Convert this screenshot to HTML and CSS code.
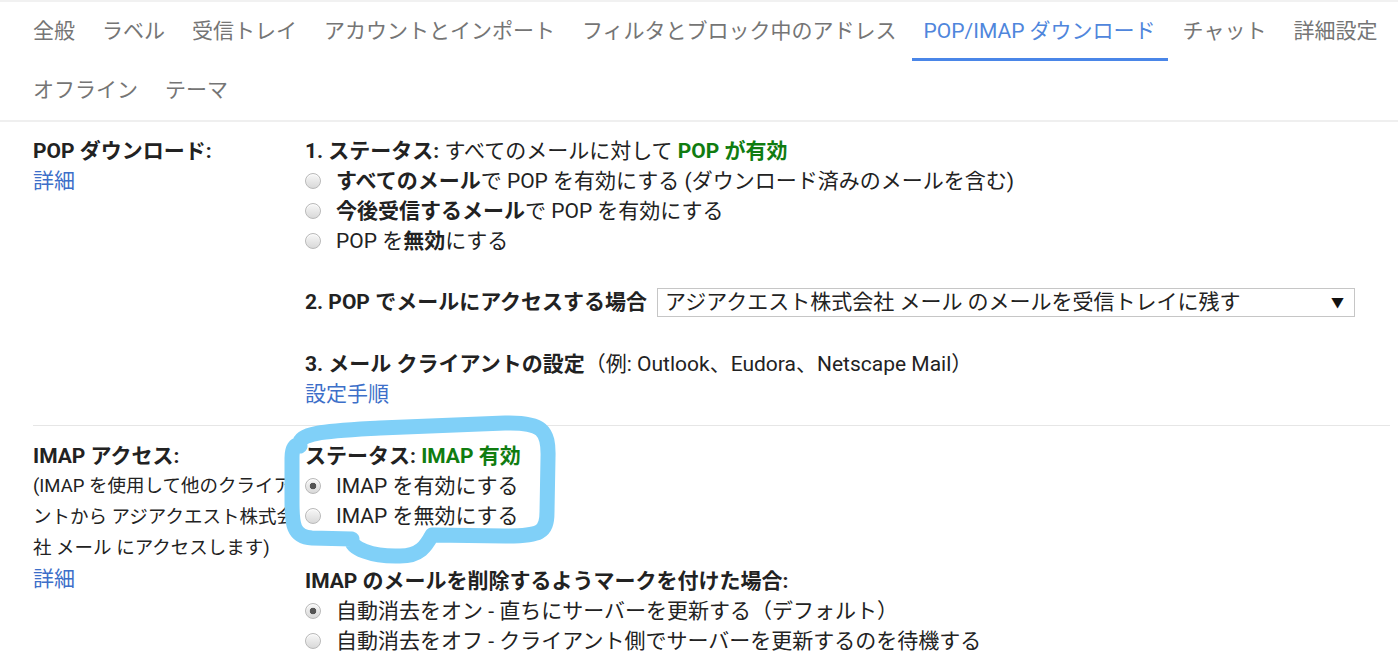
FILE: index.html
```html
<!DOCTYPE html>
<html lang="ja">
<head>
<meta charset="utf-8">
<title>設定 - POP/IMAP ダウンロード</title>
<link rel="stylesheet" href="styles.css">
</head>
<body>
<div class="page">
  <nav class="tabs">
    <a class="tab">全般</a>
    <a class="tab">ラベル</a>
    <a class="tab">受信トレイ</a>
    <a class="tab">アカウントとインポート</a>
    <a class="tab">フィルタとブロック中のアドレス</a>
    <a class="tab active">POP/IMAP ダウンロード</a>
    <a class="tab">チャット</a>
    <a class="tab">詳細設定</a>
    <a class="tab">オフライン</a>
    <a class="tab">テーマ</a>
  </nav>

  <section class="setting pop">
    <div class="label-col">
      <div class="label">POP ダウンロード:</div>
      <a class="link">詳細</a>
    </div>
    <div class="value-col">
      <div class="line"><b>1. ステータス:</b> すべてのメールに対して <b class="green">POP が有効</b></div>
      <label class="opt"><span class="radio"></span><span><b>すべてのメール</b>で POP を有効にする (ダウンロード済みのメールを含む)</span></label>
      <label class="opt"><span class="radio"></span><span><b>今後受信するメール</b>で POP を有効にする</span></label>
      <label class="opt"><span class="radio"></span><span>POP を<b>無効</b>にする</span></label>

      <div class="line step2"><b>2. POP でメールにアクセスする場合</b>
        <div class="selectbox"><span>アジアクエスト株式会社 メール のメールを受信トレイに残す</span><span class="arrow">▼</span></div>
      </div>

      <div class="line step3"><b>3. メール クライアントの設定</b>（例: Outlook、Eudora、Netscape Mail）</div>
      <a class="link line">設定手順</a>
    </div>
  </section>

  <section class="setting imap">
    <div class="label-col">
      <div class="label">IMAP アクセス:</div>
      <div class="desc">(IMAP を使用して他のクライアントから アジアクエスト株式会社 メール にアクセスします)</div>
      <a class="link">詳細</a>
    </div>
    <div class="value-col">
      <div class="line"><b>ステータス:</b> <b class="green">IMAP 有効</b></div>
      <label class="opt"><span class="radio checked"></span><span>IMAP を有効にする</span></label>
      <label class="opt"><span class="radio"></span><span>IMAP を無効にする</span></label>

      <div class="line sub"><b>IMAP のメールを削除するようマークを付けた場合:</b></div>
      <label class="opt"><span class="radio checked"></span><span>自動消去をオン - 直ちにサーバーを更新する（デフォルト）</span></label>
      <label class="opt"><span class="radio"></span><span>自動消去をオフ - クライアント側でサーバーを更新するのを待機する</span></label>
    </div>
  </section>

  <svg class="annotation" viewBox="270 405 300 165" width="300" height="165" aria-hidden="true">
    <path d="M 300 446 C 296 432, 330 431, 380 428 L 505 423 C 542 422, 549 430, 548 458 L 547 512 C 547 533, 540 536, 505 536 L 432 535 C 426 546, 420 556, 400 556 C 372 557, 350 548, 352 539 L 312 538 C 293 537, 292 524, 292 502 L 292 458 C 292 448, 295 444, 300 446 Z"
      fill="none" stroke="#80d0f8" stroke-width="15" stroke-linejoin="round" stroke-linecap="round"/>
  </svg>
</div>
</body>
</html>
```

FILE: styles.css
```css
* { box-sizing: border-box; }

html, body {
  margin: 0;
  padding: 0;
  background: #fff;
}

body {
  font-family: Roboto, "Noto Sans CJK JP", "Noto Sans", sans-serif;
  font-size: 21px;
  color: #222;
  overflow: hidden;
}

.page {
  position: relative;
  width: 1398px;
  min-height: 664px;
}

b { font-weight: 700; }

.tabs {
  display: flex;
  flex-wrap: wrap;
  padding: 0 0 0 21px;
  border-top: 2px solid #f1f1f1;
  border-bottom: 2px solid #efefef;
}

.tab {
  display: flex;
  align-items: center;
  height: 59px;
  padding: 2px 12px 0;
  margin-right: 3px;
  color: #757575;
  border-bottom: 3px solid transparent;
  white-space: nowrap;
  line-height: 1;
}

.tab.active {
  color: #4f86dc;
  border-bottom-color: #4a86e8;
}

.setting {
  display: flex;
  margin: 0 8px 0 33px;
}

.pop {
  padding: 14px 0 16px;
  border-bottom: 1px solid #e6e6e6;
}

.imap {
  padding: 15px 0 0;
}

.label-col {
  width: 272px;
  flex: none;
  line-height: 30px;
}

.label {
  font-weight: 700;
}

.desc {
  width: 270px;
  font-size: 18.5px;
  line-height: 31px;
  color: #222;
}

.link {
  display: block;
  color: #3d6fc9;
  line-height: 30px;
}

.value-col {
  flex: 1;
  line-height: 30px;
}

.line {
  line-height: 30px;
}

.green { color: #107c10; }

.opt {
  display: flex;
  align-items: center;
  gap: 15px;
  height: 30px;
}

.radio {
  width: 16px;
  height: 16px;
  flex: none;
  border-radius: 50%;
  border: 1px solid #b9b9b9;
  background: linear-gradient(#f7f7f7, #d9d9d9);
  box-shadow: inset 0 1px 1px rgba(255, 255, 255, 0.8);
}

.radio.checked {
  background:
    radial-gradient(circle, #555 0, #555 3px, transparent 3.6px),
    linear-gradient(#f7f7f7, #d9d9d9);
}

.step2 {
  display: flex;
  align-items: center;
  gap: 10px;
  margin-top: 31px;
}

.selectbox {
  display: flex;
  align-items: center;
  justify-content: space-between;
  width: 698px;
  height: 29px;
  padding: 0 10px 0 7px;
  border: 1px solid #c6c6c6;
  background: #fff;
  font-weight: 400;
  line-height: 1;
}

.arrow {
  font-size: 13px;
  color: #111;
}

.step3 {
  margin-top: 32px;
}

.sub {
  margin-top: 35px;
}

.annotation {
  position: absolute;
  left: 270px;
  top: 405px;
  pointer-events: none;
}
```
